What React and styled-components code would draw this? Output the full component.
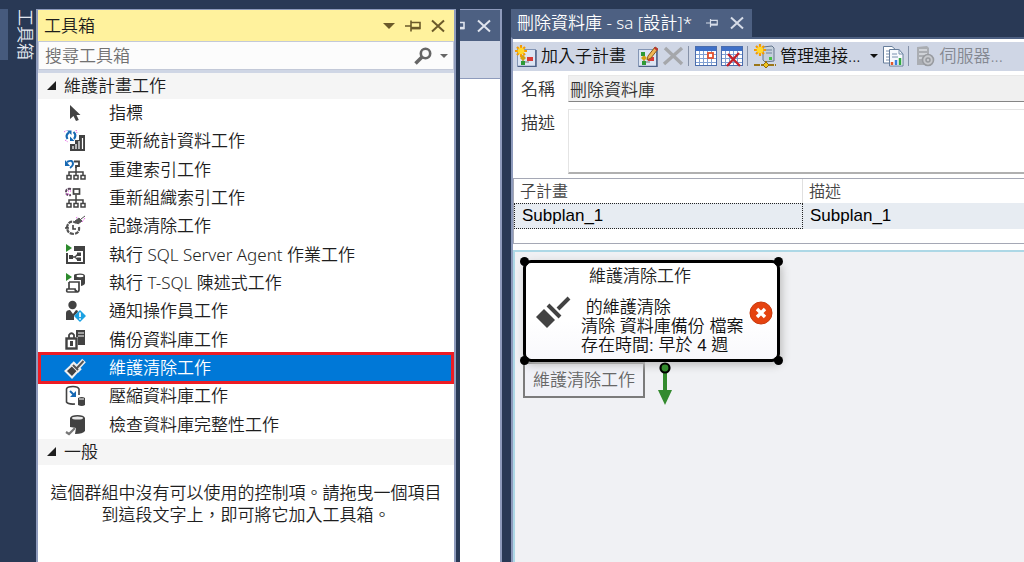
import styled, { createGlobalStyle } from 'styled-components';

const GlobalStyle = createGlobalStyle`
  * {
    box-sizing: border-box;
  }
  body {
    margin: 0;
    background: #293955;
    overflow: hidden;
  }
  body, button, input, textarea {
    font-family: 'Noto Sans', 'Noto Sans CJK TC', sans-serif;
    font-size: 17px;
    font-weight: 350;
    line-height: 22px;
  }
  button {
    border: 0;
    padding: 0;
    background: none;
    color: inherit;
    text-align: left;
  }
  svg {
    display: block;
    flex: none;
  }
`;

// Window
const Shell = styled.div`
  display: flex;
  height: 100vh;
  padding-top: 9px;
  background: #293955;
`;

const Rail = styled.nav`
  display: flex;
  flex: none;
  align-items: flex-start;
  width: 36px;
`;

const RailEdge = styled.div`
  width: 8px;
  height: 51px;
  margin-right: 6px;
  background: #465a7d;
`;

const RailTab = styled.button`
  width: 22px;
  writing-mode: vertical-rl;
  text-orientation: sideways;
  white-space: nowrap;
  color: #e4e8f0;
`;

// Toolbox
const Toolbox = styled.aside`
  display: flex;
  flex: none;
  flex-direction: column;
  width: 420px;
  margin-right: 4px;
  border: solid #8e9bbc;
  border-width: 1px 2px 0;
  background: #fff;
  color: #1e1e1e;
`;

const TitleBar = styled.header`
  display: flex;
  align-items: center;
  gap: 10px;
  height: 31px;
  padding: 0 9px 0 6px;
  background: #fff29d;
  color: #6b5a2a;
`;

const Title = styled.h2`
  flex: 1;
  margin: 0;
  font-size: 17px;
  font-weight: 350;
  color: #1e1e1e;
`;

const SearchBar = styled.div`
  display: flex;
  align-items: center;
  gap: 8px;
  height: 29px;
  padding: 0 5px 0 6px;
  border: 1px solid #c3c9d8;
  background: #fcfcfc;
  color: #666;
`;

const SearchInput = styled.input`
  flex: 1;
  min-width: 0;
  padding: 0;
  border: 0;
  outline: 0;
  background: none;
  &::placeholder {
    color: #717171;
    opacity: 1;
  }
`;

const Strip = styled.div`
  height: 3px;
  background: #cfd6e5;
`;

const GroupHeader = styled.button`
  display: flex;
  flex: none;
  align-items: center;
  gap: 6px;
  height: 26px;
  padding-left: 8px;
  background: #f5f5f5;
`;

const ItemList = styled.ul`
  display: grid;
  grid-auto-rows: 1fr;
  height: 340px;
  margin: 0;
  padding: 0 2px;
  list-style: none;
`;

const Item = styled.li`
  display: flex;
  background: ${({ $selected }) => ($selected ? '#0078d7' : 'none')};
  box-shadow: ${({ $selected }) => ($selected ? '0 0 0 2px #ed1c24, inset 0 0 0 1px #ed1c24' : 'none')};
  color: ${({ $selected }) => ($selected ? '#fff' : 'inherit')};
`;

const ItemButton = styled.button`
  display: flex;
  flex: 1;
  align-items: center;
  gap: 23px;
  padding-left: 24px;
`;

const EmptyText = styled.p`
  margin: 17px 0 0;
  text-align: center;
`;

// Panel behind the toolbox
const SidePanel = styled.section`
  display: flex;
  flex: none;
  flex-direction: column;
  width: 42px;
  margin-right: 9px;
  border: solid #8e9bbc;
  border-width: 1px 2px 0 0;
  background: #fff;
`;

const SideTitle = styled.header`
  display: flex;
  align-items: center;
  justify-content: flex-end;
  gap: 12px;
  height: 31px;
  padding-right: 9px;
  overflow: hidden;
  background: #4d6082;
  color: #dfe4ee;
`;

const SideStrip = styled.div`
  height: 38px;
  border-bottom: 1px solid #8e9bbc;
  background: #cfd6e5;
`;

// Designer document
const Document = styled.main`
  display: flex;
  flex: 1;
  flex-direction: column;
  min-width: 0;
`;

const Tab = styled.div`
  display: flex;
  align-items: center;
  align-self: flex-start;
  gap: 12px;
  height: 28px;
  padding: 0 8px 0 6px;
  background: #4d6082;
  color: #d6dce8;
  white-space: nowrap;
`;

const TabTitle = styled.span`
  margin-right: 2px;
  color: #fff;
`;

const DocumentBody = styled.div`
  display: flex;
  flex: 1;
  flex-direction: column;
  border-top: 2px solid #4d6082;
  border-left: 2px solid #8e9bbc;
  background: #fff;
  color: #333;
`;

const Toolbar = styled.div`
  display: flex;
  align-items: center;
  height: 29px;
  margin-top: 3px;
  padding: 0 0 2px 2px;
  overflow: hidden;
  background: #cfd6e5;
`;

const ToolButton = styled.button`
  display: flex;
  flex: none;
  align-items: center;
  gap: 4px;
  margin-right: ${({ $gap = 4 }) => $gap}px;
  color: ${({ disabled }) => (disabled ? '#848891' : '#111')};
  white-space: nowrap;
`;

const Separator = styled.span`
  flex: none;
  width: 1px;
  height: 20px;
  margin-right: 6px;
  background: #8591a8;
`;

const Field = styled.div`
  display: flex;
  align-items: flex-start;
  margin-top: ${({ $gap }) => $gap}px;
`;

const Label = styled.label`
  flex: none;
  width: 55px;
  padding: 3px 0 0 8px;
  color: #333;
`;

const NameInput = styled.input`
  flex: 1;
  min-width: 0;
  height: 27px;
  padding: 0 1px;
  border: solid #e8e8e8;
  border-width: 1px 0 1px 1px;
  border-bottom-color: #858585;
  outline: 0;
  background: #f0f0f0;
  color: #333;
`;

const DescriptionInput = styled.textarea`
  flex: 1;
  min-width: 0;
  height: 65px;
  border: solid #e4e4e4;
  border-width: 1px 0 2px 1px;
  border-bottom-color: #b0b0b0;
  outline: 0;
  resize: none;
`;

const PlanPane = styled.div`
  height: 66px;
  margin-top: 4px;
  border: solid #a5a8b5;
  border-width: 1px 0 1px 1px;
`;

const PlanTable = styled.table`
  width: 100%;
  table-layout: fixed;
  border-collapse: separate;
  border-spacing: 0;
`;

const HeadCell = styled.th`
  width: ${({ $width }) => $width || 'auto'};
  height: 24px;
  padding: 0 6px;
  color: #444;
  font-size: 16px;
  font-weight: 350;
  text-align: left;
  &:first-child {
    border-right: 1px solid #e0e0e0;
  }
`;

const Cell = styled.td`
  height: 26px;
  padding: 0 7px;
  border: ${({ $focused }) => ($focused ? '1px dotted #222' : '0')};
  background: #e7ecf2;
  color: #000;
  font: 17px/22px 'Liberation Sans', sans-serif;
`;

const Canvas = styled.div`
  position: relative;
  flex: 1;
  margin-top: 6px;
  border: solid #add8e6;
  border-width: 2px 0 0 2px;
  background: #f0f1f4;
  color: #222;
`;

const TaskNode = styled.div`
  position: absolute;
  top: 8px;
  left: 8px;
  display: flex;
  gap: 9px;
  width: 257px;
  height: 102px;
  padding: 3px 4px 0 10px;
  border: 3px solid #000;
  border-radius: 8px;
  background: linear-gradient(#fff 60%, #f8f8fc);
  box-shadow: 2px 3px 8px #bbb;
  font-family: 'Liberation Sans', 'Noto Sans CJK TC', sans-serif;
`;

const NodeIcon = styled.div`
  align-self: center;
`;

const NodeText = styled.div`
  flex: 1;
  min-width: 0;
  white-space: pre;
`;

const NodeTitle = styled.h3`
  margin: 0 0 10px 8px;
  font-size: 17px;
  font-weight: 350;
  line-height: 22px;
`;

const NodeLine = styled.p`
  margin: 0;
  color: #111;
  line-height: 19px;
`;

const Handle = styled.i`
  position: absolute;
  ${({ $v }) => $v}: -6px;
  ${({ $h }) => $h}: -6px;
  width: 9px;
  height: 9px;
  border-radius: 50%;
  background: #000;
`;

const NodeTip = styled.div`
  position: absolute;
  top: 110px;
  left: 8px;
  width: 122px;
  padding: 5px 8px;
  border: 2px solid #7b7b7b;
  background: #f0f1f7;
  color: #666;
`;

const Connector = styled.div`
  position: absolute;
  top: 108px;
  left: 142px;
`;

// Glyphs
const Svg = ({ w = 22, h = w, children, ...rest }) => (
  <svg width={w} height={h} viewBox={`0 0 ${w} ${h}`} fill="none" aria-hidden="true" {...rest}>
    {children}
  </svg>
);

const CloseIcon = () => (
  <Svg w={14} stroke="currentColor" strokeWidth="2">
    <path d="M1 1.5 13 12.5M13 1.5 1 12.5" />
  </Svg>
);

const PinIcon = ({ w = 16 }) => (
  <svg width={w} height="12" viewBox="0 0 16 12" fill="none" stroke="currentColor" strokeWidth="1.6" aria-hidden="true">
    <path d="M0 6H6M6 .5V11.500M6 2.500H15V8.500H6" />
    <path d="M6 8H15" strokeWidth="2.400" />
  </svg>
);

const Caret = ({ w = 8 }) => (
  <svg width={w} height={w / 2} viewBox="0 0 8 4" aria-hidden="true">
    <path d="M0 0H8L4 4Z" fill="currentColor" />
  </svg>
);

const SearchIcon = () => (
  <Svg w={18} stroke="currentColor">
    <circle cx="11.500" cy="6.500" r="4.700" strokeWidth="2.600" />
    <path d="M8 10 1.500 16.500" strokeWidth="3.600" />
  </Svg>
);

const ExpandIcon = () => (
  <Svg w={12} h={10}>
    <path d="M10 0V9H1Z" fill="#1e1e1e" />
  </Svg>
);

const PointerIcon = () => (
  <Svg>
    <path d="M6 3V17L9.500 14L12 19L14.800 18L12.500 13H16.500Z" fill="#424242" />
  </Svg>
);

const StatsIcon = () => (
  <Svg>
    <path d="M15 5H21V21H6V14H11V10H15Z" fill="#424242" />
    <path d="M9 19V16M12 19V14M15 19V11M18.500 19V8" stroke="#fff" strokeWidth="1.200" />
    <path d="M3.500 9Q1 5 5 2.500M9.500 2Q13 5 10 9" stroke="#1668b3" strokeWidth="2.200" />
    <path d="M3 .5H7.500V5ZM6 11V6.500L10.500 11Z" fill="#1668b3" />
    <path d="M0 2L3 0M12 0L13 3M1 10L4 12" stroke="#e04be0" strokeDasharray="1 1" />
  </Svg>
);

const treeLines = (
  <g stroke="#424242" strokeWidth="1.500">
    <path d="M12 8V12M5 17V13H19V17M12 12V17" />
    <rect x="3" y="16.500" width="4" height="3.500" />
    <rect x="10" y="16.500" width="4" height="3.500" />
    <rect x="17" y="16.500" width="4" height="3.500" />
  </g>
);

const RebuildIcon = () => (
  <Svg>
    {treeLines}
    <path d="M10 2.500H15V7H12V9" stroke="#424242" strokeWidth="1.800" />
    <path d="M3 3Q9 0 9 5Q9 7 6 9" stroke="#1668b3" strokeWidth="2" />
    <path d="M1 1V7H6Z" fill="#1668b3" />
  </Svg>
);

const ReorganizeIcon = () => (
  <Svg>
    {treeLines}
    <rect x="9.500" y="2" width="6" height="5" stroke="#424242" strokeWidth="1.700" />
    <path d="M7 2Q2 1 2 5Q2 9 7 8" stroke="#5b475d" strokeWidth="2" strokeDasharray="3 1" />
    <path d="M4 4H7M2 7H5" stroke="#e04be0" strokeDasharray="1 1" />
  </Svg>
);

const HistoryIcon = () => (
  <Svg>
    <path d="M13 8Q5 4 3 12Q3 19 10 19Q16 18 15 12" stroke="#555" strokeWidth="2.200" strokeDasharray="4 1" />
    <path d="M9 10V14H12M1 13H5" stroke="#424242" strokeWidth="1.600" />
    <path d="M11 6L15 3L18 6L14 9ZM17 4L21 1" fill="#555" stroke="#555" />
    <path d="M12 3L14 2M18 7L21 3" stroke="#e04be0" strokeDasharray="1 1" />
  </Svg>
);

const AgentJobIcon = () => (
  <Svg>
    <path d="M10 2H21V20H2V9H4V18H19V7H10Z" fill="#424242" />
    <path d="M6 13H11M11 13L14 10H16M11 13L14 16H16" stroke="#424242" strokeWidth="1.300" />
    <path d="M5 11H9V15H5ZM13 8.500H17V12H13ZM13 13.500H17V17H13Z" fill="#424242" />
    <path d="M2 0V8L8 4Z" fill="#2c8a2c" />
  </Svg>
);

const TsqlIcon = () => (
  <Svg>
    <path d="M10 3Q11 1.500 16 1.500Q21 1.500 21 4V11Q21 13 17 14V8H10Z" fill="#424242" />
    <ellipse cx="16" cy="4" rx="3.500" ry="1.200" fill="#fff" />
    <path d="M5 10H15V18Q15 20 12 20H4Q2 20 3 17H11Q11 19 13 19M5 10V17" stroke="#424242" strokeWidth="1.700" />
    <path d="M2 1V9L8 5Z" fill="#2c8a2c" />
  </Svg>
);

const OperatorIcon = () => (
  <Svg>
    <circle cx="8.500" cy="5" r="4.200" fill="#424242" />
    <path d="M2 20V13Q2 10 6 10L9 14L12 10Q14 10 14 12L10 16V20Z" fill="#424242" />
    <path d="M16 11L21 16L16 21L11 16Z" fill="#1ba1e2" stroke="#1ba1e2" strokeWidth="1.500" strokeLinejoin="round" />
    <path d="M16 12.500V17M16 18.200V19.700" stroke="#fff" strokeWidth="1.700" />
  </Svg>
);

const BackupIcon = () => (
  <Svg>
    <path d="M12 1H21V16H14V8H12Z" fill="#424242" />
    <path d="M14 4H20M14 7H20" stroke="#fff" />
    <rect x="2.500" y="9.500" width="10" height="10" fill="#fff" stroke="#424242" strokeWidth="2.400" />
    <path d="M5 9V6Q7.500 2.500 10 6V9" stroke="#424242" strokeWidth="1.800" />
    <path d="M7.500 12V17" stroke="#424242" strokeWidth="3" />
  </Svg>
);

const BrushIcon = () => (
  <Svg>
    <path d="M1.500 14L8 8L14 14L8 20.500Z" fill="#424242" stroke="#f0f0f0" strokeWidth="2" />
    <path d="M8 6L16 14M13 11L20 3.500" stroke="#f0f0f0" strokeWidth="5" />
    <path d="M9 8L14 13M13 11L19.500 4" stroke="#555" strokeWidth="2" />
  </Svg>
);

const ShrinkIcon = () => (
  <Svg>
    <path d="M15 10V4Q14 1.500 9 1.500Q3 1.500 2.500 4V17Q4 19.500 11 19" stroke="#424242" strokeWidth="1.600" />
    <path d="M6 6L11 11" stroke="#1668b3" strokeWidth="2" />
    <path d="M12 6V12H6Z" fill="#1668b3" />
    <path d="M14 13Q18 11 21 13V20Q18 22 14 20Z" fill="#424242" />
    <path d="M15 14H20" stroke="#fff" />
  </Svg>
);

const IntegrityIcon = () => (
  <Svg>
    <path d="M6 4Q7 1 13.500 1Q20 1 21 4V17Q19 20 11 20L12 14L6 13Z" fill="#424242" />
    <ellipse cx="13.500" cy="4" rx="5.500" ry="1.500" fill="#e8e8e8" />
    <path d="M2 18L5 20L11 14" stroke="#777" strokeWidth="2.200" />
  </Svg>
);

const Sun = () => (
  <g>
    <path d="M6 0V12M0 6H12M2 2L10 10M10 2L2 10" stroke="#f49b00" strokeWidth="2.200" />
    <circle cx="6" cy="6" r="3.300" fill="#ffd92e" />
  </g>
);

const PlanFrame = () => (
  <g>
    <rect x="2.500" y="4.500" width="18" height="17" fill="#dce5f3" stroke="#8496b5" />
    <path d="M3 21.500H21V5" stroke="#4e6187" strokeWidth="1.500" />
    <path d="M8 10V17H14" stroke="#777" />
    <path d="M8 10L11 13L8 16L5 13Z" fill="#d3a313" />
    <rect x="6" y="16" width="4" height="4" fill="#2e9a35" />
    <rect x="12" y="12" width="6" height="4" fill="#d83a36" />
  </g>
);

const AddPlanIcon = () => (
  <Svg>
    <PlanFrame />
    <Sun />
  </Svg>
);

const EditPlanIcon = () => (
  <Svg>
    <PlanFrame />
    <rect x="5" y="7" width="4" height="4" fill="#2e9a35" />
    <path d="M11 15L12 11L19 2L22 4L15 13Z" fill="#f0b653" stroke="#8c5a1b" />
    <path d="M18.500 2.500L21.500 5" stroke="#b33" strokeWidth="2" />
  </Svg>
);

const DeleteIcon = () => (
  <Svg>
    <path d="M3 3L20 19M20 3L2 19" stroke="#a5a7ab" strokeWidth="3.400" />
  </Svg>
);

const CalendarIcon = ({ crossed }) => (
  <Svg>
    <rect x=".5" y="1.500" width="21" height="19" fill="#fff" stroke="#4a6dad" />
    <path d="M1 2H21V6H1Z" fill="#3f70c8" />
    <path d="M1 9.500H21M1 13.500H21M1 17.500H21M4.500 6V20M8.500 6V20M12.500 6V20M16.500 6V20" stroke="#7f9fd2" />
    {crossed ? (
      <path d="M7 9L19 21M18 8L6 21" stroke="#c3222c" strokeWidth="2.400" />
    ) : (
      <rect x="13" y="8" width="5" height="5" fill="#fff" stroke="#e3502d" strokeWidth="1.800" />
    )}
  </Svg>
);

const ConnectionIcon = () => (
  <Svg w={22} h={24}>
    <path d="M9 3L18 2L20 4V17L11 18L9 16Z" fill="#c5d0dc" stroke="#64758c" />
    <path d="M12 6H18M12 9H18" stroke="#6e8299" />
    <path d="M15 13H18V16H15Z" fill="#46c246" />
    <path d="M0 21H22M12 17V21" stroke="#9b7617" strokeWidth="2" strokeDasharray="6 1" />
    <path d="M12 18L15 21L12 24L9 21Z" fill="#efc31d" stroke="#8b6814" />
    <Sun />
  </Svg>
);

const ReportIcon = () => (
  <Svg>
    <path d="M1.500 1.500H10L14 5V18H1.500Z" fill="#fff" stroke="#667d9a" />
    <path d="M4 6H9M4 9H9M4 12H9M4 15H9" stroke="#7890ae" />
    <path d="M7.500 4.500H17L21 9V21H7.500Z" fill="#f6f9fd" stroke="#667d9a" />
    <path d="M17 4V9H21M10 9H15M10 12H16" stroke="#7890ae" />
    <path d="M10 20V17" stroke="#e2592b" strokeWidth="2.500" />
    <path d="M14 20V15" stroke="#3c7fdd" strokeWidth="2.500" />
    <path d="M18 20V13" stroke="#32a842" strokeWidth="2.500" />
  </Svg>
);

const ServerIcon = () => (
  <Svg w={20} h={22}>
    <path d="M2 2L12 1L14 3V20H2Z" fill="#aaadb2" />
    <path d="M4 5H12M4 9H12M4 13H9" stroke="#dde0e5" strokeWidth="1.500" />
    <circle cx="13" cy="15" r="5.500" fill="#c7c9cd" stroke="#989ba0" strokeWidth="1.600" />
    <circle cx="13" cy="15" r="2" stroke="#989ba0" strokeWidth="1.500" />
  </Svg>
);

const LargeBrush = () => (
  <Svg w={36}>
    <path d="M0 22L8 14L19 25L11 33Z" fill="#424242" />
    <path d="M12 10L24 22M22 14L33 3" stroke="#424242" strokeWidth="4" />
  </Svg>
);

const ErrorIcon = () => (
  <Svg w={24}>
    <circle cx="12" cy="12" r="11" fill="#e54310" stroke="#c93a0d" />
    <path d="M8 8L16 16M16 8L8 16" stroke="#fff" strokeWidth="3.400" />
  </Svg>
);

const ArrowIcon = () => (
  <Svg w={16} h={46}>
    <path d="M8 8V34" stroke="#338a2e" strokeWidth="4" />
    <path d="M1 30H15L8 45Z" fill="#338a2e" />
    <circle cx="8" cy="8" r="4.500" fill="#338a2e" stroke="#000" strokeWidth="2.200" />
  </Svg>
);

const tools = [
  { name: '指標', Icon: PointerIcon },
  { name: '更新統計資料工作', Icon: StatsIcon },
  { name: '重建索引工作', Icon: RebuildIcon },
  { name: '重新組織索引工作', Icon: ReorganizeIcon },
  { name: '記錄清除工作', Icon: HistoryIcon },
  { name: '執行 SQL Server Agent 作業工作', Icon: AgentJobIcon },
  { name: '執行 T-SQL 陳述式工作', Icon: TsqlIcon },
  { name: '通知操作員工作', Icon: OperatorIcon },
  { name: '備份資料庫工作', Icon: BackupIcon },
  { name: '維護清除工作', Icon: BrushIcon, selected: true },
  { name: '壓縮資料庫工作', Icon: ShrinkIcon },
  { name: '檢查資料庫完整性工作', Icon: IntegrityIcon },
];

const ToolboxPanel = () => (
  <Toolbox>
    <TitleBar>
      <Title>工具箱</Title>
      <button type="button" aria-label="選項"><Caret w={12} /></button>
      <button type="button" aria-label="釘選"><PinIcon /></button>
      <button type="button" aria-label="關閉"><CloseIcon /></button>
    </TitleBar>
    <SearchBar>
      <SearchInput type="text" placeholder="搜尋工具箱" aria-label="搜尋工具箱" />
      <button type="button" aria-label="搜尋"><SearchIcon /></button>
      <button type="button" aria-label="搜尋選項"><Caret /></button>
    </SearchBar>
    <Strip />
    <GroupHeader type="button"><ExpandIcon />維護計畫工作</GroupHeader>
    <ItemList>
      {tools.map(({ name, Icon, selected }) => (
        <Item key={name} $selected={selected}>
          <ItemButton type="button"><Icon />{name}</ItemButton>
        </Item>
      ))}
    </ItemList>
    <GroupHeader type="button"><ExpandIcon />一般</GroupHeader>
    <EmptyText>
      這個群組中沒有可以使用的控制項。請拖曳一個項目
      <br />
      到這段文字上，即可將它加入工具箱。
    </EmptyText>
  </Toolbox>
);

const DesignerToolbar = () => (
  <Toolbar>
    <ToolButton type="button" $gap={10}><AddPlanIcon />加入子計畫</ToolButton>
    <ToolButton type="button" aria-label="編輯"><EditPlanIcon /></ToolButton>
    <ToolButton type="button" aria-label="刪除" disabled><DeleteIcon /></ToolButton>
    <Separator />
    <ToolButton type="button" aria-label="排程"><CalendarIcon /></ToolButton>
    <ToolButton type="button" aria-label="移除排程"><CalendarIcon crossed /></ToolButton>
    <Separator />
    <ToolButton type="button" $gap={10}><ConnectionIcon />管理連接...</ToolButton>
    <ToolButton type="button" aria-label="連接選項"><Caret /></ToolButton>
    <ToolButton type="button" aria-label="報表"><ReportIcon /></ToolButton>
    <Separator />
    <ToolButton type="button" disabled><ServerIcon />伺服器...</ToolButton>
  </Toolbar>
);

const DesignCanvas = () => (
  <Canvas>
    <NodeTip>維護清除工作</NodeTip>
    <TaskNode>
      <NodeIcon><LargeBrush /></NodeIcon>
      <NodeText>
        <NodeTitle>維護清除工作</NodeTitle>
        <NodeLine> 的維護清除</NodeLine>
        <NodeLine>清除 資料庫備份 檔案</NodeLine>
        <NodeLine>存在時間: 早於 4 週</NodeLine>
      </NodeText>
      <NodeIcon><ErrorIcon /></NodeIcon>
      <Handle $v="top" $h="left" />
      <Handle $v="top" $h="right" />
      <Handle $v="bottom" $h="left" />
      <Handle $v="bottom" $h="right" />
    </TaskNode>
    <Connector><ArrowIcon /></Connector>
  </Canvas>
);

const App = () => {
  return (
    <>
      <GlobalStyle />
      <Shell>
        <Rail>
          <RailEdge />
          <RailTab type="button">工具箱</RailTab>
        </Rail>
        <ToolboxPanel />
        <SidePanel>
          <SideTitle>
            <PinIcon />
            <button type="button" aria-label="關閉"><CloseIcon /></button>
          </SideTitle>
          <SideStrip />
        </SidePanel>
        <Document>
          <Tab>
            <TabTitle>刪除資料庫 - sa [設計]*</TabTitle>
            <button type="button" aria-label="釘選"><PinIcon w={12} /></button>
            <button type="button" aria-label="關閉"><CloseIcon /></button>
          </Tab>
          <DocumentBody>
            <DesignerToolbar />
            <Field $gap={4}>
              <Label htmlFor="plan-name">名稱</Label>
              <NameInput id="plan-name" type="text" defaultValue="刪除資料庫" />
            </Field>
            <Field $gap={7}>
              <Label htmlFor="plan-description">描述</Label>
              <DescriptionInput id="plan-description" />
            </Field>
            <PlanPane>
              <PlanTable>
                <thead>
                  <tr>
                    <HeadCell $width="289px">子計畫</HeadCell>
                    <HeadCell>描述</HeadCell>
                  </tr>
                </thead>
                <tbody>
                  <tr>
                    <Cell $focused>Subplan_1</Cell>
                    <Cell>Subplan_1</Cell>
                  </tr>
                </tbody>
              </PlanTable>
            </PlanPane>
            <DesignCanvas />
          </DocumentBody>
        </Document>
      </Shell>
    </>
  );
};

export default App;
